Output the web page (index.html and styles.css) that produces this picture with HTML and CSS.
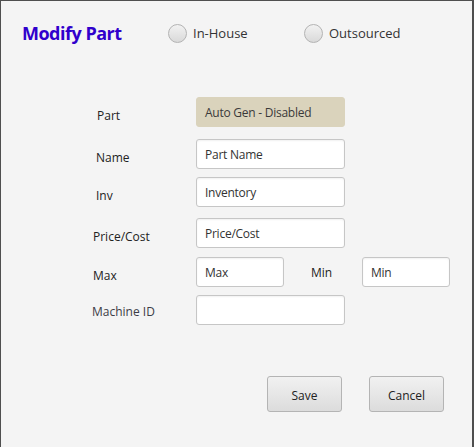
FILE: index.html
```html
<!DOCTYPE html>
<html>
<head>
<meta charset="utf-8">
<link rel="stylesheet" href="styles.css">
</head>
<body>
<div class="window">
  <div class="header">
    <h1 class="title">Modify Part</h1>
    <label class="radio radio-inhouse"><span class="dot"></span><span>In-House</span></label>
    <label class="radio radio-out"><span class="dot"></span><span>Outsourced</span></label>
  </div>
  <div class="form">
    <div class="row row-part">
      <span class="label l-part">Part</span>
      <div class="field field-disabled">Auto Gen - Disabled</div>
    </div>
    <div class="row row-name">
      <span class="label l-name">Name</span>
      <div class="field">Part Name</div>
    </div>
    <div class="row row-inv">
      <span class="label l-inv">Inv</span>
      <div class="field">Inventory</div>
    </div>
    <div class="row row-price">
      <span class="label l-price">Price/Cost</span>
      <div class="field">Price/Cost</div>
    </div>
    <div class="row row-max">
      <span class="label l-max">Max</span>
      <div class="field field-small">Max</div>
      <span class="label-min">Min</span>
      <div class="field field-small">Min</div>
    </div>
    <div class="row row-mach">
      <span class="label l-mach">Machine ID</span>
      <div class="field"></div>
    </div>
  </div>
  <div class="buttons">
    <button class="btn">Save</button>
    <button class="btn">Cancel</button>
  </div>
</div>
</body>
</html>
```
FILE: styles.css
```css
html, body {
  margin: 0;
  padding: 0;
}
body {
  width: 474px;
  height: 447px;
  overflow: hidden;
  font-family: "Open Sans", "Noto Sans", sans-serif;
}
.window {
  box-sizing: border-box;
  width: 474px;
  height: 447px;
  background: #f4f4f4;
  border-left: 1px solid #4f4f4f;
  border-top: 1px solid #4f4f4f;
  border-right: 2px solid #4f4f4f;
}
.header {
  display: flex;
  align-items: center;
  height: 64px;
  padding-left: 21px;
}
.title {
  margin: 0;
  font-size: 18px;
  font-weight: 700;
  color: #3000cc;
  letter-spacing: -0.5px;
  width: 146px;
}
.radio {
  display: flex;
  align-items: center;
  gap: 6px;
  font-size: 13px;
  color: #333;
}
.radio-inhouse {
  width: 136px;
}
.dot {
  box-sizing: border-box;
  width: 19px;
  height: 19px;
  border-radius: 50%;
  border: 1px solid #b3b3b3;
  background: linear-gradient(#f2f2f2, #d9d9d9);
}
.form {
  display: flex;
  flex-direction: column;
  padding-left: 91px;
  padding-top: 32px;
}
.row {
  display: flex;
  align-items: center;
  height: 30px;
}
.row-name { margin-top: 12px; }
.row-inv { margin-top: 8px; }
.row-price { margin-top: 11px; }
.row-max { margin-top: 9px; }
.row-mach { margin-top: 8px; }
.label {
  width: 104px;
  box-sizing: border-box;
  font-size: 12px;
  color: #222;
  padding-top: 6px;
}
.l-part { padding-left: 5px; }
.l-name { padding-left: 4px; }
.l-inv { padding-left: 4px; }
.l-price { padding-left: 1px; }
.l-max { padding-left: 1px; }
.l-mach { padding-top: 2px; color: #3c3c46; }
.field {
  box-sizing: border-box;
  width: 149px;
  height: 30px;
  background: #fff;
  border: 1px solid #c6c6c6;
  border-radius: 3px;
  padding-left: 8px;
  font-size: 12px;
  letter-spacing: -0.25px;
  color: #333;
  display: flex;
  align-items: center;
  box-shadow: inset 0 1px 2px rgba(0,0,0,0.06);
}
.field-disabled {
  background: #dad3bc;
  border-color: #dad3bc;
  box-shadow: none;
  color: #3a3a3a;
}
.field-small {
  width: 88px;
}
.label-min {
  width: 78px;
  box-sizing: border-box;
  padding-left: 27px;
  font-size: 12px;
  color: #222;
}
.buttons {
  display: flex;
  gap: 27px;
  padding-left: 266px;
  padding-top: 51px;
}
.btn {
  box-sizing: border-box;
  width: 75px;
  height: 36px;
  border: 1px solid #b4b4b4;
  border-radius: 3px;
  background: linear-gradient(#f1f1f1, #dcdcdc);
  font-family: "Open Sans", "Noto Sans", sans-serif;
  font-size: 12px;
  color: #222;
  padding: 2px 0 0;
}
```
